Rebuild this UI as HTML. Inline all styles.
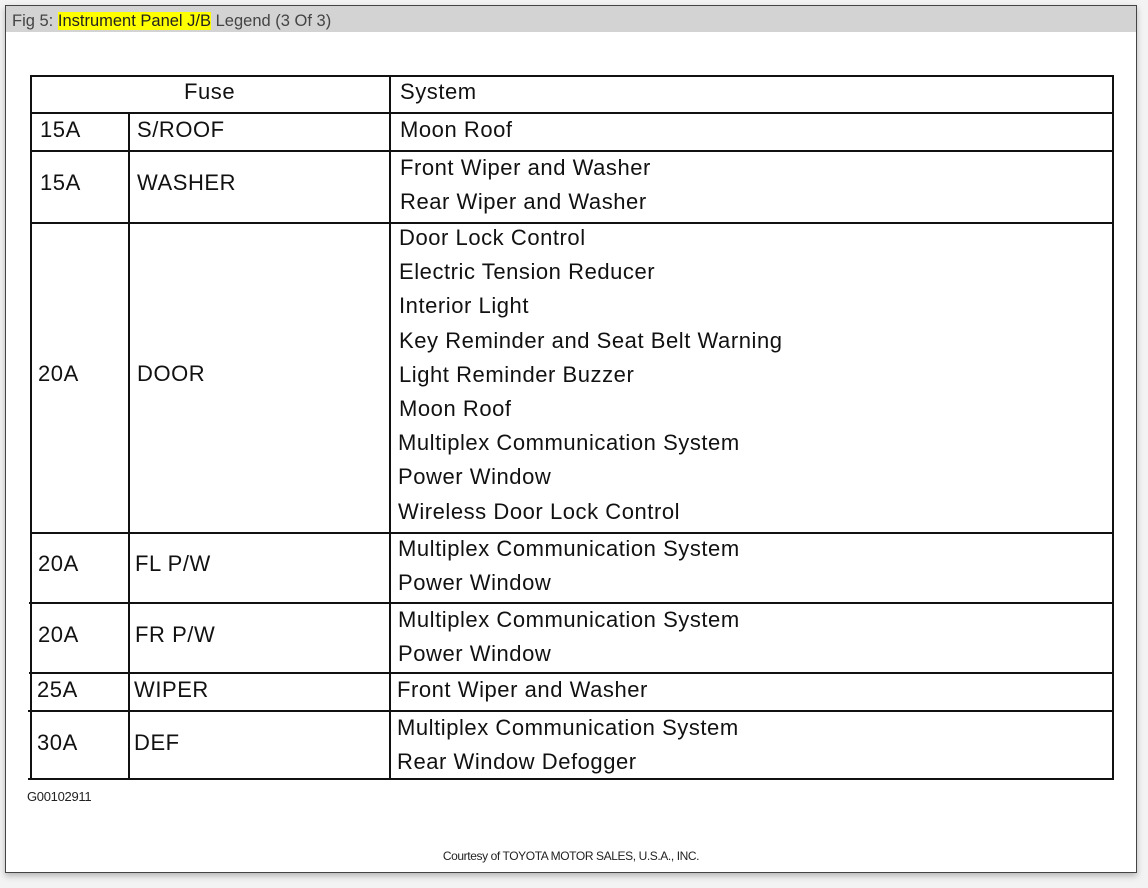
<!DOCTYPE html>
<html><head><style>
body{margin:0;width:1148px;height:888px;background:#f3f3f3;position:relative;overflow:hidden;font-family:"Liberation Sans",Arial,sans-serif}
#f{position:absolute;left:5px;top:5px;width:1130px;height:866px;background:#fff;border:1px solid #444;box-shadow:0 3px 6px rgba(0,0,0,.25)}
#t{position:absolute;left:0;top:0;width:1130px;height:26px;background:#d3d3d3;font-size:16.5px;color:#444;line-height:30px;padding-left:6px;box-sizing:border-box}
#t span{background:#ff0;color:#222}
.h{position:absolute;background:#111;height:2px}
.v{position:absolute;background:#111;width:2px}
.x{position:absolute;font-size:22px;color:#111;line-height:22px;white-space:nowrap;letter-spacing:0.55px}
</style></head><body>
<div id="f"><div id="t">Fig 5: <span>Instrument Panel J/B</span> Legend (3 Of 3)</div></div>
<div class="h" style="left:30px;top:75px;width:1084px"></div>
<div class="h" style="left:30px;top:112px;width:1084px"></div>
<div class="h" style="left:30px;top:150px;width:1084px"></div>
<div class="h" style="left:30px;top:222px;width:1084px"></div>
<div class="h" style="left:30px;top:532px;width:1084px"></div>
<div class="h" style="left:29px;top:602px;width:1084px"></div>
<div class="h" style="left:29px;top:672px;width:1084px"></div>
<div class="h" style="left:28px;top:710px;width:1084px"></div>
<div class="h" style="left:28px;top:778px;width:1084px"></div>
<div class="v" style="left:30px;top:75px;height:705px"></div>
<div class="v" style="left:128px;top:112px;height:668px"></div>
<div class="v" style="left:389px;top:75px;height:705px"></div>
<div class="v" style="left:1112px;top:75px;height:705px"></div>
<div class="x" style="left:184px;top:81px">Fuse</div>
<div class="x" style="left:400px;top:81px">System</div>
<div class="x" style="left:40px;top:119px">15A</div><div class="x" style="left:137px;top:119px">S/ROOF</div>
<div class="x" style="left:40px;top:172px">15A</div><div class="x" style="left:137px;top:172px">WASHER</div>
<div class="x" style="left:38px;top:363px">20A</div><div class="x" style="left:137px;top:363px">DOOR</div>
<div class="x" style="left:38px;top:553px">20A</div><div class="x" style="left:135px;top:553px">FL P/W</div>
<div class="x" style="left:38px;top:624px">20A</div><div class="x" style="left:135px;top:624px">FR P/W</div>
<div class="x" style="left:37px;top:679px">25A</div><div class="x" style="left:134px;top:679px">WIPER</div>
<div class="x" style="left:37px;top:732px">30A</div><div class="x" style="left:134px;top:732px">DEF</div>
<div class="x" style="left:400px;top:119px">Moon Roof</div>
<div class="x" style="left:400px;top:157px">Front Wiper and Washer</div>
<div class="x" style="left:400px;top:191px">Rear Wiper and Washer</div>
<div class="x" style="left:399px;top:227px">Door Lock Control</div>
<div class="x" style="left:399px;top:261px">Electric Tension Reducer</div>
<div class="x" style="left:399px;top:295px">Interior Light</div>
<div class="x" style="left:399px;top:330px">Key Reminder and Seat Belt Warning</div>
<div class="x" style="left:399px;top:364px">Light Reminder Buzzer</div>
<div class="x" style="left:399px;top:398px">Moon Roof</div>
<div class="x" style="left:398px;top:432px">Multiplex Communication System</div>
<div class="x" style="left:398px;top:466px">Power Window</div>
<div class="x" style="left:398px;top:501px">Wireless Door Lock Control</div>
<div class="x" style="left:398px;top:538px">Multiplex Communication System</div>
<div class="x" style="left:398px;top:572px">Power Window</div>
<div class="x" style="left:398px;top:609px">Multiplex Communication System</div>
<div class="x" style="left:398px;top:643px">Power Window</div>
<div class="x" style="left:397px;top:679px">Front Wiper and Washer</div>
<div class="x" style="left:397px;top:717px">Multiplex Communication System</div>
<div class="x" style="left:397px;top:751px">Rear Window Defogger</div>
<div style="position:absolute;left:27px;top:789px;font-size:13px;color:#222;letter-spacing:-.3px">G00102911</div>
<div style="position:absolute;left:0;width:1142px;text-align:center;top:849px;font-size:12px;color:#222;letter-spacing:-.4px">Courtesy of TOYOTA MOTOR SALES, U.S.A., INC.</div>
</body></html>
